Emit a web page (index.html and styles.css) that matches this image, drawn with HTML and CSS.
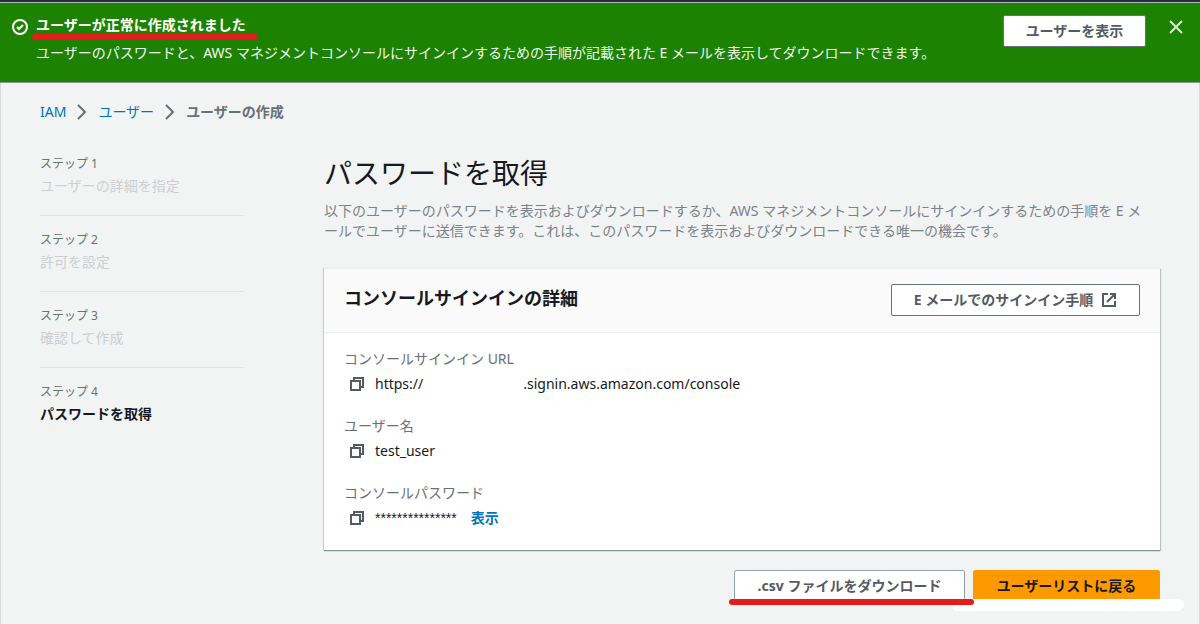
FILE: index.html
```html
<!DOCTYPE html>
<html lang="ja">
<head>
<meta charset="utf-8">
<meta name="viewport" content="width=device-width, initial-scale=1">
<title>ユーザーの作成 | IAM</title>
<link rel="stylesheet" href="styles.css">
</head>
<body>
<svg class="sprite" aria-hidden="true">
  <symbol id="copy" viewBox="0 0 16 16"><path d="M2 5h9v9H2zM5 5V2h9v9h-3" fill="none" stroke="currentColor" stroke-width="2"/></symbol>
  <symbol id="chevron" viewBox="0 0 16 16"><path d="M4 1l7 7-7 7" fill="none" stroke="currentColor" stroke-width="2"/></symbol>
</svg>
<div class="topbar"></div>
<section class="alert" role="status">
  <svg class="alert-icon" viewBox="0 0 16 16" aria-hidden="true"><g fill="none" stroke="currentColor" stroke-width="2"><circle cx="8" cy="8" r="7"/><path d="M5 8l2 2 4-4"/></g></svg>
  <div class="alert-text">
    <h2 class="alert-title">ユーザーが正常に作成されました<span class="marker marker-title"></span></h2>
    <p class="alert-body">ユーザーのパスワードと、AWS マネジメントコンソールにサインインするための手順が記載された E メールを表示してダウンロードできます。</p>
  </div>
  <button class="btn btn-view" type="button">ユーザーを表示</button>
  <button class="close" type="button" aria-label="閉じる"><svg class="icon" viewBox="0 0 16 16"><path d="M2 2l12 12M14 2L2 14" fill="none" stroke="currentColor" stroke-width="2"/></svg></button>
</section>
<div class="page">
  <nav class="crumbs" aria-label="パンくずリスト">
    <a href="#">IAM</a>
    <svg class="icon"><use href="#chevron"/></svg>
    <a href="#">ユーザー</a>
    <svg class="icon"><use href="#chevron"/></svg>
    <span class="crumb-current">ユーザーの作成</span>
  </nav>
  <div class="columns">
    <ol class="steps">
      <li class="step"><span class="step-label">ステップ 1</span><span class="step-name">ユーザーの詳細を指定</span></li>
      <li class="step"><span class="step-label">ステップ 2</span><span class="step-name">許可を設定</span></li>
      <li class="step"><span class="step-label">ステップ 3</span><span class="step-name">確認して作成</span></li>
      <li class="step" aria-current="step"><span class="step-label">ステップ 4</span><span class="step-name step-active">パスワードを取得</span></li>
    </ol>
    <main class="main">
      <h1 class="title">パスワードを取得</h1>
      <p class="lead">以下のユーザーのパスワードを表示およびダウンロードするか、AWS マネジメントコンソールにサインインするための手順を E メールでユーザーに送信できます。これは、このパスワードを表示およびダウンロードできる唯一の機会です。</p>
      <section class="panel">
        <header class="panel-head">
          <h2 class="panel-title">コンソールサインインの詳細</h2>
          <button class="btn btn-mail" type="button">E メールでのサインイン手順
            <svg class="icon" viewBox="0 0 16 16" aria-hidden="true"><path d="M7 2H2v12h12V9M9 2h5v5M14 2L6 10" fill="none" stroke="currentColor" stroke-width="2"/></svg>
          </button>
        </header>
        <dl class="details">
          <div class="detail">
            <dt>コンソールサインイン URL</dt>
            <dd><button class="copy" type="button" aria-label="URL をコピー"><svg class="icon"><use href="#copy"/></svg></button><span>https://<span class="redacted"></span>.signin.aws.amazon.com/console</span></dd>
          </div>
          <div class="detail">
            <dt>ユーザー名</dt>
            <dd><button class="copy" type="button" aria-label="ユーザー名をコピー"><svg class="icon"><use href="#copy"/></svg></button><span>test_user</span></dd>
          </div>
          <div class="detail">
            <dt>コンソールパスワード</dt>
            <dd><button class="copy" type="button" aria-label="パスワードをコピー"><svg class="icon"><use href="#copy"/></svg></button><span class="mask">***************</span><button class="reveal" type="button">表示</button></dd>
          </div>
        </dl>
      </section>
      <div class="actions">
        <button class="btn btn-csv" type="button">.csv ファイルをダウンロード</button>
        <button class="btn btn-primary" type="button">ユーザーリストに戻る</button>
        <span class="smudge"></span>
        <span class="marker marker-csv"></span>
      </div>
    </main>
  </div>
</div>
</body>
</html>
```
FILE: styles.css
```css
* { box-sizing: border-box; }
body {
  margin: 0;
  min-height: 100vh;
  display: flex;
  flex-direction: column;
  background: #f2f3f3;
  color: #16191f;
  font: 14px/20px "Noto Sans", "Noto Sans CJK JP", sans-serif;
}
h1, h2, p, ol, dl, dd { margin: 0; padding: 0; }
button { font: inherit; color: inherit; cursor: pointer; }
a { color: #0073bb; text-decoration: none; }
.sprite { display: none; }
.icon { width: 16px; height: 16px; display: block; flex: none; }

.topbar { height: 3px; background: #232f3e; border-bottom: 1px solid #b5bcb8; }
.alert {
  display: flex;
  align-items: flex-start;
  min-height: 80px;
  padding: 12px 16px 18px 12px;
  background: #1d8102;
  border-bottom: 1px solid #879596;
  color: #fff;
}
.alert-icon { width: 16px; height: 16px; margin-top: 4px; flex: none; }
.alert-text { flex: 1; padding-left: 8px; }
.alert-title { position: relative; width: max-content; font-size: 14px; line-height: 20px; }
.alert-body { margin-top: 8px; color: #f2f8f0; }
.close { margin: 4px 0 0 22px; padding: 0; border: 0; background: none; color: #d9ead5; }

.btn {
  display: flex;
  align-items: center;
  justify-content: center;
  gap: 8px;
  height: 32px;
  padding: 0 20px;
  border: 1px solid #687078;
  border-radius: 2px;
  background: #fff;
  color: #545b64;
  font-weight: 700;
  white-space: nowrap;
}
.btn-view { min-width: 143px; }
.btn-mail { min-width: 249px; }
.btn-csv { min-width: 231px; border-color: #95a0a5; }
.btn-primary { min-width: 187px; border-color: #f90; background: #f90; color: #16191f; }

.page {
  flex: 1;
  padding: 19px 39px 20px;
  border: solid #d5dbdb;
  border-width: 0 1px;
}
.crumbs { display: flex; align-items: center; gap: 8px; color: #687078; }
.crumb-current { font-weight: 700; }

.columns { display: grid; grid-template-columns: 204px minmax(0, 1fr); column-gap: 80px; }
.steps { list-style: none; padding-top: 32px; }
.step { padding-bottom: 19px; margin-bottom: 14px; border-bottom: 1px solid #dfe3e3; }
.step:last-child { border: 0; }
.step-label, .step-name { display: block; }
.step-label { font-size: 12px; color: #687078; }
.step-name { margin-top: 2px; color: #cbcfd1; }
.step-active { color: #16191f; font-weight: 700; }

.main { padding-top: 33px; }
.title { font-size: 28px; line-height: 36px; font-weight: 400; }
.lead { margin-top: 10px; padding-right: 16px; color: #7b838a; }
.panel {
  margin-top: 27px;
  background: #fff;
  border-top: 1px solid #eaeded;
  box-shadow: 0 1px 1px #879596, 1px 1px 1px #c4cacb, -1px 0 1px #d5dadb;
}
.panel-head {
  display: flex;
  align-items: flex-start;
  justify-content: space-between;
  padding: 15px 20px 16px;
  background: #fafafa;
  border-bottom: 1px solid #eaeded;
}
.panel-title { font-size: 18px; line-height: 28px; }
.details { display: grid; gap: 20px; padding: 16px 20px 20px; }
.detail dt { color: #687078; line-height: 20px; }
.detail dd { display: flex; align-items: center; margin-top: 3px; padding-left: 5px; height: 24px; }
.copy { display: block; margin-right: 10px; padding: 0; border: 0; background: none; color: #545b64; }
.redacted { display: inline-block; width: 100px; }
.mask { font-family: "Liberation Sans", sans-serif; }
.reveal { margin-left: 14px; padding: 0; border: 0; background: none; color: #0073bb; font-weight: 700; }

.actions { position: relative; display: flex; justify-content: flex-end; gap: 8px; margin-top: 20px; }

/* Highlighter strokes drawn over the interface */
.marker { position: absolute; height: 6px; border-radius: 3px; background: #e61b1b; }
.marker-title { top: 19px; left: -4px; right: -12px; }
.marker-csv { top: 29px; right: 186px; width: 245px; }
.smudge { position: absolute; top: 29px; right: -24px; width: 231px; height: 12px; border-radius: 4px 6px 8px 4px; background: #fff; }
```
